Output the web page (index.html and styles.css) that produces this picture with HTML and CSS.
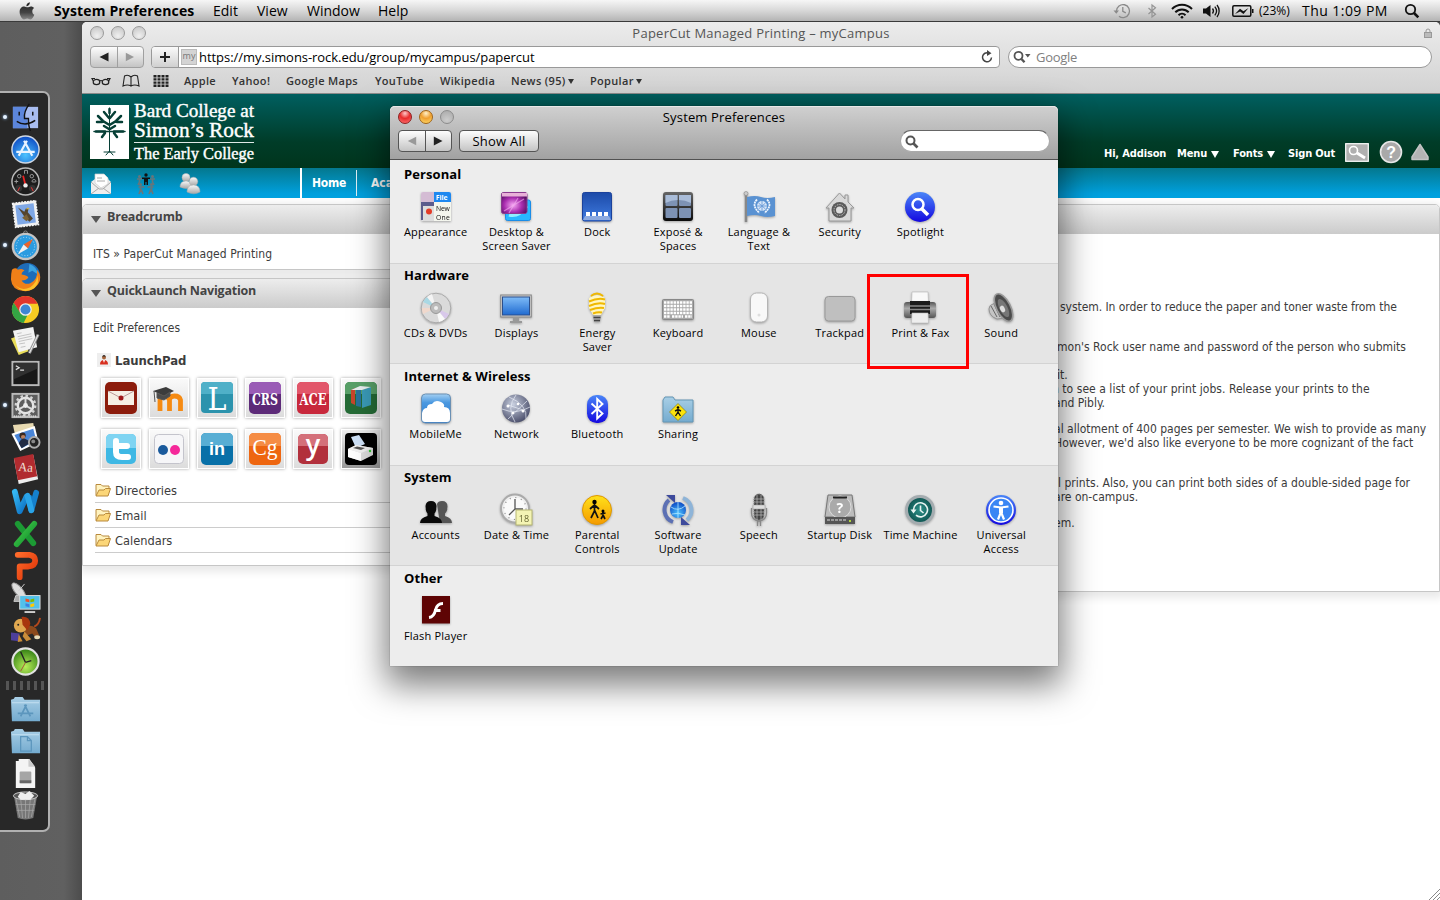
FILE: index.html
```html
<!DOCTYPE html>
<html lang="en">
<head>
<meta charset="utf-8">
<title>System Preferences</title>
<link rel="stylesheet" href="styles.css">
</head>
<body>
<svg class="defs" width="0" height="0">
  <defs>
    <linearGradient id="blue" x1="0" y1="0" x2="0" y2="1"><stop offset="0" stop-color="#7fbcf8"/><stop offset="1" stop-color="#1f6ad0"/></linearGradient>
    <linearGradient id="sky" x1="0" y1="0" x2="0" y2="1"><stop offset="0" stop-color="#a4d0f2"/><stop offset=".3" stop-color="#4a98e0"/><stop offset="1" stop-color="#2a78cc"/></linearGradient>
    <linearGradient id="deep" x1="0" y1="0" x2="0" y2="1"><stop offset="0" stop-color="#1c4aa8"/><stop offset="1" stop-color="#3f7be0"/></linearGradient>
    <linearGradient id="royal" x1="0" y1="0" x2="0" y2="1"><stop offset="0" stop-color="#4a86f8"/><stop offset="1" stop-color="#1408e0"/></linearGradient>
    <linearGradient id="silver" x1="0" y1="0" x2="0" y2="1"><stop offset="0" stop-color="#fafafa"/><stop offset="1" stop-color="#a8a8a8"/></linearGradient>
    <linearGradient id="steel" x1="0" y1="0" x2="0" y2="1"><stop offset="0" stop-color="#555"/><stop offset=".4" stop-color="#aaa"/><stop offset="1" stop-color="#555"/></linearGradient>
    <linearGradient id="folder" x1="0" y1="0" x2="0" y2="1"><stop offset="0" stop-color="#a9cfe6"/><stop offset="1" stop-color="#74abcf"/></linearGradient>
    <linearGradient id="black" x1="0" y1="0" x2="0" y2="1"><stop offset="0" stop-color="#666"/><stop offset="1" stop-color="#0a0a0a"/></linearGradient>
    <linearGradient id="apple" x1="0" y1="0" x2="0" y2="1"><stop offset="0" stop-color="#222"/><stop offset=".6" stop-color="#444"/><stop offset="1" stop-color="#888"/></linearGradient>
    <linearGradient id="gold" x1="0" y1="0" x2="0" y2="1"><stop offset="0" stop-color="#ffe21a"/><stop offset="1" stop-color="#f59a00"/></linearGradient>
    <radialGradient id="globe" cx=".4" cy=".35" r=".7"><stop offset="0" stop-color="#c9d0e0"/><stop offset="1" stop-color="#474b68"/></radialGradient>
    <radialGradient id="aqua" cx=".5" cy=".7" r=".7"><stop offset="0" stop-color="#4cc3ff"/><stop offset="1" stop-color="#0b49c4"/></radialGradient>
    <radialGradient id="lime" cx=".5" cy=".7" r=".7"><stop offset="0" stop-color="#b8ee5a"/><stop offset="1" stop-color="#2f7d12"/></radialGradient>
    <radialGradient id="pink" cx=".45" cy=".6" r=".7"><stop offset="0" stop-color="#f7a6f4"/><stop offset=".5" stop-color="#a82cae"/><stop offset="1" stop-color="#3d0a4c"/></radialGradient>
    <radialGradient id="teal" cx=".5" cy=".5" r=".6"><stop offset="0" stop-color="#2a9088"/><stop offset="1" stop-color="#0a4644"/></radialGradient>
    <linearGradient id="word" x1="0" y1="0" x2="1" y2="1"><stop offset="0" stop-color="#35b8f4"/><stop offset="1" stop-color="#0a6cc0"/></linearGradient>
    <linearGradient id="excel" x1="0" y1="0" x2="1" y2="1"><stop offset="0" stop-color="#46d04a"/><stop offset="1" stop-color="#0d8a2c"/></linearGradient>
    <linearGradient id="ppt" x1="0" y1="0" x2="1" y2="1"><stop offset="0" stop-color="#ff6a2a"/><stop offset="1" stop-color="#dd3408"/></linearGradient>
  </defs>
</svg>

<header class="menubar">
  <svg class="apple" viewBox="0 0 16 18" width="16" height="18"><path d="M10.800.3c.1 1.300-.4 2.300-1.100 3.000-.7.700-1.500 1.100-2.300 1.000C7.300 3.200 7.800 2.300 8.400 1.600 9.100.9 10 .4 10.800.3zM13.300 9.300c0-1.500.8-2.600 1.900-3.300-.8-1.100-2-1.600-3.300-1.600-1.400 0-2.300.8-3.300.8-1.100 0-2.100-.8-3.400-.8C2.700 4.400.6 6.400.6 9.800c0 3.700 2.400 7.600 4.400 7.600 1.100 0 1.800-.8 3.200-.8s2 .8 3.200.8c1.700 0 3.300-2.700 3.900-4.600-1.300-.6-2-1.900-2-3.500z" fill="url(#apple)"/></svg>
  <b class="m-app">System Preferences</b><span class="m-edit">Edit</span><span class="m-view">View</span><span class="m-window">Window</span><span class="m-help">Help</span>
  <div class="status">
    <svg class="s-tm" viewBox="0 0 18 16" width="18" height="16" fill="none" stroke="#8a8a8a" stroke-width="1.300"><path d="M3.500 8A6.500 6.500 0 1 1 6 13.200M9.800 4v4.300l3 1.500"/><path d="M.5 7.500h5.500L3.300 10.700z" fill="#8a8a8a" stroke="none"/></svg>
    <svg class="s-bt" viewBox="0 0 10 16" width="10" height="16" fill="none" stroke="#949494" stroke-width="1.200"><path d="M1.500 5l7 6.200L5 14V2l3.500 2.800-7 6.200"/></svg>
    <svg class="s-wifi" viewBox="0 0 22 16" width="22" height="16" fill="none" stroke="#111" stroke-width="2"><path d="M1 6a14 14 0 0 1 20 0M4.300 9.200a9.400 9.400 0 0 1 13.400 0M7.500 12.200a5 5 0 0 1 7 0"/><circle cx="11" cy="14.300" r="1.300" fill="#111" stroke="none"/></svg>
    <svg class="s-vol" viewBox="0 0 18 16" width="18" height="16"><path d="M1 5.500h3L8.500 2v12L4 10.500H1z" fill="#111"/><path d="M10.500 5.500a4 4 0 0 1 0 5M12.800 3.600a7 7 0 0 1 0 8.800M15 2a9.500 9.500 0 0 1 0 12" fill="none" stroke="#111" stroke-width="1.300"/></svg>
    <svg class="s-bat" viewBox="0 0 22 12" width="22" height="12"><rect x=".8" y=".8" width="18" height="10.400" rx="1.200" fill="none" stroke="#111" stroke-width="1.500"/><path d="M20 4v4h1.500V4z" fill="#111"/><path d="M3 9l5-5.300 3.400 2.500L16.500 3l-5 6-3.400-2.500z" fill="#111"/></svg>
    <span class="s-pct">(23%)</span><span class="s-time">Thu 1:09 PM</span>
    <svg class="s-find" viewBox="0 0 16 16" width="16" height="16" fill="none" stroke="#111"><circle cx="6.500" cy="6.500" r="4.700" stroke-width="1.800"/><path d="M10 10l4.300 4.300" stroke-width="2.600"/></svg>
  </div>
</header>

<main class="desktop">
  <nav class="dock">
    <div class="app run"><svg viewBox="0 0 32 32"><rect x="3" y="5" width="26" height="22" fill="#a9bdf0"/><path d="M3 5h15q-3 6-3 12h3v10H3z" fill="#5c86dc"/><path d="M20 2q-6 8-5 15h4q0 8 2 13" fill="none" stroke="#111" stroke-width="1.500"/><path d="M9.500 10v4M23.500 10v4M7 20q9 6 19-1" fill="none" stroke="#111" stroke-width="1.500"/></svg></div>
    <div class="app"><svg viewBox="0 0 32 32"><circle cx="16" cy="16" r="14" fill="url(#aqua)" stroke="#cfd8e4" stroke-width="1.500"/><g stroke="#e8f3ff" stroke-width="2.200" fill="none"><path d="M17.500 7L9 22.500M14.500 7L23 22.500M6.500 18.500h19"/></g></svg></div>
    <div class="app"><svg viewBox="0 0 32 32"><circle cx="16" cy="16" r="14" fill="#1d1d1d" stroke="#bbb" stroke-width="1.500"/><g stroke="#999" stroke-width="1" fill="none"><path d="M4.500 16h4M6.500 14v4M23 16.500a2 1.700 0 1 1 3.500 0z"/><circle cx="9.500" cy="10.500" r="1.800"/><circle cx="22.500" cy="10.500" r="1.800"/><path d="M15 8V4.500h3V8"/></g><circle cx="9" cy="23" r="3.500" fill="#333"/><circle cx="23" cy="23" r="3.500" fill="#333"/><path d="M8 26l2-4M24 26l-2-4" stroke="#e33"/><path d="M13.500 10L16 20" stroke="#e22" stroke-width="1.800"/><circle cx="16" cy="20" r="2.300" fill="#eee"/></svg></div>
    <div class="app"><svg viewBox="0 0 32 32"><g transform="rotate(-7 16 16)"><rect x="4" y="4" width="24" height="25" fill="#f0f0f0" stroke="#f5f5f5" stroke-width="1.500" stroke-dasharray="2 1"/><rect x="6.500" y="6.500" width="19" height="20" fill="#7fa8e6"/><path d="M9 9l6 5 2-3 2.500 1-1 3 4.500 7-4 3-4-5z" fill="#54452f"/><path d="M12 20l5-3 2 5-3 2z" fill="#7a6238"/><path d="M17 12l2-2 2 2z" fill="#d8b030"/></g></svg></div>
    <div class="app run"><svg viewBox="0 0 32 32"><circle cx="16" cy="3" r="2" fill="none" stroke="#888"/><circle cx="16" cy="17" r="13" fill="#2b9be0" stroke="#c4c4c4" stroke-width="2.500"/><circle cx="16" cy="17" r="9.500" fill="none" stroke="#b9e2fa" stroke-dasharray="1 2"/><path d="M24 9l-5.500 10-4.500-4z" fill="#e8642c"/><path d="M8 25l6-10 4.500 4z" fill="#f0f0f0"/></svg></div>
    <div class="app"><svg viewBox="0 0 32 32"><circle cx="18" cy="14" r="13" fill="#1e6cb8"/><path d="M20 2q8 3 9 11l-6-4-4 2z" fill="#3ba3e0"/><path d="M2 8q4-3 6 0 5-2 7 1-3 1-3 4 6 1 7 3-2 3-7 3 3 5 9 3 8-4 7-14 6 8 1 15-6 8-15 7Q2 29 1 18 1 12 2 8z" fill="#f08018"/><path d="M4 22q7 9 17 4 7-5 7-12 3 8-3 13-12 8-21-5z" fill="#fbc12c"/></svg></div>
    <div class="app"><svg viewBox="0 0 32 32"><circle cx="16" cy="16" r="14" fill="#f6cc22"/><path d="M16 2a14 14 0 0 1 12.500 8H16L10 19 3.800 9A14 14 0 0 1 16 2z" fill="#e3352c"/><path d="M3.800 9L11 20l7 2-4 8A14 14 0 0 1 3.800 9z" fill="#34a544"/><circle cx="16" cy="16" r="6.500" fill="#eee"/><circle cx="16" cy="16" r="5.200" fill="#3e86d4"/></svg></div>
    <div class="app"><svg viewBox="0 0 32 32"><path d="M1 13l8 17 10-4L14 8z" fill="#e8dc58"/><path d="M3 5l21-4 4 21-19 5z" fill="#f3f3f3"/><path d="M7 8l5-1M8 11l14-3M8.500 13.500l14-3M9 16l14-3M9.500 18.500l6-1M11 22l5-1" stroke="#b5b5b5" stroke-width=".8"/><path d="M29 9L20 28" stroke="#999" stroke-width="3"/><path d="M29 9L20 28" stroke="#eee" stroke-width="1"/></svg></div>
    <div class="app"><svg viewBox="0 0 32 32"><rect x="2.500" y="4" width="27" height="24" fill="#181818" stroke="#b9b9b9" stroke-width="2"/><path d="M4 5h24v6L4 22z" fill="#303030"/><path d="M6 8l3.500 2L6 12M10.500 12.500h4" fill="none" stroke="#e0e0e0" stroke-width="1.200"/></svg></div>
    <div class="app run"><svg viewBox="0 0 32 32"><rect x="2.500" y="4" width="27" height="24" fill="#5d5d5d" stroke="#b9b9b9" stroke-width="2"/><circle cx="16" cy="16" r="8" fill="none" stroke="#e4e4e4" stroke-width="2.500"/><circle cx="16" cy="16" r="10" fill="none" stroke="#d4d4d4" stroke-width="2.500" stroke-dasharray="2.600 2.600"/><path d="M16 16V8M16 16l7 4M16 16l-7 4" stroke="#ddd" stroke-width="2"/><circle cx="16" cy="16" r="2.500" fill="#eee"/><path d="M4 27h24" stroke="#ddd" stroke-width="2" stroke-dasharray="1 1"/></svg></div>
    <div class="app"><svg viewBox="0 0 32 32"><path d="M3 3l21-2 3 18-20 2z" fill="#e7d9b0"/><path d="M1.500 12l24-8 4 17-19 9z" fill="#fff"/><path d="M4.500 13.500L24 7l3 12-15 8z" fill="#4a86d8"/><circle cx="13" cy="14" r="3.200" fill="#3a2820"/><circle cx="13.500" cy="15.500" r="2.200" fill="#b98060"/><path d="M9 22q3-7 8-4l5 3-10 6z" fill="#222c44"/><circle cx="25" cy="21" r="5.500" fill="#222" stroke="#aaa" stroke-width="2"/><circle cx="24" cy="20" r="2" fill="#888"/></svg></div>
    <div class="app"><svg viewBox="0 0 32 32"><path d="M4 5l20-4 5 25-20 5z" fill="#eee"/><path d="M4 4l20-4 4 23-20 4z" fill="#b12b2f"/><text x="16" y="18" font-family="Liberation Serif" font-size="13" fill="#f0e0d8" text-anchor="middle" transform="rotate(5 16 16)">Aa</text></svg></div>
    <div class="app"><svg viewBox="0 0 32 32" fill="none" stroke-width="6" stroke-linecap="round" stroke-linejoin="round"><path d="M20 12l2 13L27 7" stroke="#1580cc"/><path d="M5 6l5 20 7-15" stroke="url(#word)"/><path d="M18 10l4 15" stroke="#2aa4e8"/></svg></div>
    <div class="app"><svg viewBox="0 0 32 32" fill="none" stroke-width="6" stroke-linecap="round"><path d="M8 6l16 20" stroke="#1c9a34"/><path d="M25 6L7 27" stroke="url(#excel)"/></svg></div>
    <div class="app"><svg viewBox="0 0 32 32" fill="none" stroke="url(#ppt)" stroke-width="6" stroke-linecap="round" stroke-linejoin="round"><path d="M8 5h12q6 1 6 6t-7 6h-9v11"/></svg></div>
    <div class="app"><svg viewBox="0 0 32 32"><ellipse cx="9" cy="9" rx="4" ry="10" fill="#ddd" stroke="#999" transform="rotate(-40 9 9)"/><path d="M9 9l6-7M6 14l-2 6h12l-4-6z" stroke="#ccc" fill="#aaa"/><rect x="10" y="14" width="21" height="14" fill="#52c1ea" stroke="#ddd"/><path d="M16 17l4 1v3l-4-1z" fill="#f25022"/><path d="M21 18l4-1v3l-4 1z" fill="#7fba00"/><path d="M16 22l4 1v3l-4-1z" fill="#3f7fe0"/><path d="M21 23l4-1v3l-4 1z" fill="#ffc800"/><path d="M15 31h11" stroke="#ccc" stroke-width="2"/></svg></div>
    <div class="app"><svg viewBox="0 0 32 32"><path d="M25 13q5-2 6-9" stroke="#b4481c" stroke-width="2" fill="none"/><path d="M14 13q8-3 13 2l4 9-4 1-4-5-8 3z" fill="#8c4a1c"/><circle cx="11" cy="12" r="7" fill="#e0a850"/><path d="M12 3q8-1 9 7l-3 7-5-6z" fill="#a8360e"/><path d="M15 18l7 8-5 2-4-5z" fill="#c98d3a"/><path d="M1 19l9 1-1 8-8-1z" fill="#4d3f9c"/><path d="M9 21l4 7-5 1z" fill="#c98d3a"/><ellipse cx="28" cy="24" rx="3" ry="2" fill="#e8dcb8"/><circle cx="8.500" cy="11" r="1" fill="#222"/></svg></div>
    <div class="app"><svg viewBox="0 0 32 32"><circle cx="16" cy="16" r="13.500" fill="url(#lime)" stroke="#e2e2e2" stroke-width="2.200"/><path d="M16 17l6-2M16 17L11 6" stroke="#222" stroke-width="1.400"/><path d="M16 17l-5 9" stroke="#a33" stroke-width=".8"/></svg></div>
    <div class="dock-sep"><i></i><i></i><i></i><i></i><i></i><i></i></div>
    <div class="app"><svg viewBox="0 0 32 32"><path d="M1 6l3-1 1-2h8l2 3h16v22H2z" fill="url(#folder)"/><path d="M2 9h28" stroke="#c3dff0"/><path d="M17 11l-6 12M15 11l6 12M8 20h16" stroke="#5c96bd" stroke-width="1.800"/></svg></div>
    <div class="app"><svg viewBox="0 0 32 32"><path d="M1 6l3-1 1-2h8l2 3h16v22H2z" fill="url(#folder)"/><path d="M2 9h28" stroke="#c3dff0"/><path d="M11 11h7l4 4v11H11zM18 11v4h4" fill="none" stroke="#5c96bd" stroke-width="1.300"/></svg></div>
    <div class="app"><svg viewBox="0 0 32 32"><path d="M6 3h3V1h11l5 7 1 2v21H6z" fill="#f4f4f4"/><path d="M19 1v8h7" fill="#ccc"/><rect x="10" y="14" width="12" height="12" rx="1" fill="#a5a5a5"/><path d="M10 23h12v3H10z" fill="#666"/></svg></div>
    <div class="app"><svg viewBox="0 0 32 32"><path d="M4 6l4 23q8 3 16 0l4-23z" fill="#777"/><path d="M6 8l4 20M11 9l2 20M16 9v20M21 9l-2 20M26 8l-4 20M6 15h20M7 21h18" stroke="#aaa" stroke-width=".7"/><ellipse cx="16" cy="6" rx="12.500" ry="4" fill="#555" stroke="#ccc"/><path d="M8 7l3-5 5 2 4-3 5 5-4 4H11z" fill="#eee"/></svg></div>
  </nav>

  <section class="safari">
    <div class="chrome">
      <div class="titlebar"><span class="lights off"><i></i><i></i><i></i></span><h1>PaperCut Managed Printing – myCampus</h1>
        <svg class="lock" viewBox="0 0 8 10" width="8" height="10"><rect x=".5" y="4.500" width="7" height="5" fill="#bbb" stroke="#999"/><path d="M2 4.500V3a2 2 0 0 1 4 0v1.500" fill="none" stroke="#999"/></svg></div>
      <div class="toolbar">
        <div class="seg light"><span><svg viewBox="0 0 10 10" width="10" height="10"><path d="M9.500 .5v9L.5 5z" fill="#222"/></svg></span><span><svg viewBox="0 0 10 10" width="10" height="10"><path d="M.8 .8v8.400L9 5z" fill="#999"/></svg></span></div>
        <div class="address"><span class="plus"><svg viewBox="0 0 12 12" width="12" height="12"><path d="M6 1v10M1 6h10" stroke="#222" stroke-width="2"/></svg></span><span class="favicon">my</span><span class="url">https://my.simons-rock.edu/group/mycampus/papercut</span>
          <svg class="reload" viewBox="0 0 14 14" width="14" height="14"><path d="M11.500 7.500A4.500 4.500 0 1 1 8.500 3" fill="none" stroke="#444" stroke-width="1.500"/><path d="M7 0v6l4.500-2.800z" fill="#444"/></svg></div>
        <div class="google"><svg viewBox="0 0 18 14" width="18" height="14"><circle cx="5.500" cy="5.800" r="4" fill="none" stroke="#555" stroke-width="1.800"/><path d="M8.500 9l3 3.300" stroke="#555" stroke-width="2.400"/><path d="M12 4h5.500l-2.700 3.500z" fill="#555"/></svg><span>Google</span></div>
      </div>
      <div class="bookmarks">
        <svg class="glasses" viewBox="0 0 20 12" width="20" height="12" fill="none" stroke="#222" stroke-width="1.200"><ellipse cx="5.500" cy="7" rx="3.300" ry="2.600"/><ellipse cx="14.500" cy="7" rx="3.300" ry="2.600"/><path d="M8.500 6q1.500-1 3 0M2.300 6L1 3.500h3M17.700 6L19 3.500h-3"/></svg>
        <svg class="book" viewBox="0 0 18 14" width="18" height="14" fill="none" stroke="#222" stroke-width="1.100"><path d="M9 3Q6 0 2.500 2L1 12q4.500-2 8 0 3.500-2 8 0L15.500 2Q12 0 9 3zM9 3v9"/></svg>
        <svg class="grid" viewBox="0 0 16 12" width="16" height="12" fill="none" stroke="#222" stroke-width="2.400" stroke-dasharray="3 1"><path d="M.5 1.200h15M.5 4.400h15M.5 7.600h15M.5 10.800h15"/></svg>
        <span class="b1">Apple</span><span class="b2">Yahoo!</span><span class="b3">Google Maps</span><span class="b4">YouTube</span><span class="b5">Wikipedia</span><span class="b6">News (95)<i class="caret"></i></span><span class="b7">Popular<i class="caret"></i></span>
      </div>
    </div>

    <div class="page">
      <div class="banner">
        <svg class="logo" viewBox="0 0 170 60" width="170" height="60">
          <rect x="0" y="1" width="39" height="54" fill="#fff"/>
          <g stroke="#063f36" fill="none" stroke-linecap="round"><path d="M19.500 4v44M14 48h11M16 51l3.500-4 3.500 4" stroke-width="1"/><path d="M19.500 5v4M19 14l-5-6M20 14l5-6M19.500 21L13 17 8 12M19.500 21l6.500-4 5-5M12 18H7M27 18h5M6 27.500h9M24 27.500h9M19 25l-5-3M20 25l5-3M15 29l-3 4M24 29l3 4" stroke-width="2.500"/><path d="M4 27.500h31" stroke-width="1.500"/></g>
          <g font-family="Liberation Serif, serif" fill="#fff" stroke="#fff" stroke-width=".4"><text x="44" y="13" font-size="18" textLength="120" lengthAdjust="spacingAndGlyphs">Bard College at</text><text x="44" y="32.500" font-size="20.500" textLength="120" lengthAdjust="spacingAndGlyphs">Simon’s Rock</text><text x="44" y="54.500" font-size="16.500" textLength="120" lengthAdjust="spacingAndGlyphs">The Early College</text></g>
          <path d="M44 38.500h120" stroke="#dfe9e6"/>
        </svg>
        <div class="userbar">
          <span class="u1">Hi, Addison</span><span class="u2">Menu <i></i></span><span class="u3">Fonts <i></i></span><span class="u4">Sign Out</span>
          <svg class="u-search" viewBox="0 0 24 19" width="24" height="19"><rect x=".7" y=".7" width="22.600" height="17.600" fill="#b0b0b0" stroke="#fff" stroke-width="1.200"/><circle cx="8.500" cy="7.500" r="4" fill="none" stroke="#fff" stroke-width="1.600"/><path d="M12 10l8 5" stroke="#fff" stroke-width="3"/></svg>
          <svg class="u-help" viewBox="0 0 24 24" width="24" height="24"><circle cx="12" cy="12" r="10.500" fill="#a9a9a9" stroke="#e6e6e6" stroke-width="1.600"/><text x="12" y="18" text-anchor="middle" font-family="Liberation Sans" font-weight="700" font-size="16" fill="#fff">?</text></svg>
          <svg class="u-up" viewBox="0 0 20 18" width="20" height="18"><path d="M10 1.500l8 12.500v2.500H2V14z" fill="#b4b4b4" stroke="#c4c4c4" stroke-width="1.500" stroke-linejoin="round"/></svg>
        </div>
      </div>
      <div class="sitenav">
        <svg class="n1" viewBox="0 0 20 22" width="20" height="22"><path d="M0 9l4-3V1h9l4 4v1l3 3v12H0z" fill="#eee"/><path d="M4 10V1h9l4 4v6l-7 4z" fill="#fff" stroke="#ccc" stroke-width=".7"/><path d="M6 5h5M6 8h8M0 9l8 7h4l8-7M0 21l8-6M20 21l-8-6" stroke="#aaa" fill="none"/></svg>
        <svg class="n2" viewBox="0 0 20 22" width="20" height="22"><g fill="#111"><circle cx="10" cy="2" r="1.700"/><path d="M6 4.500h8V6h-2v6h-1.500V9h-1v3H8V6H6z"/></g><g fill="none" stroke="#68757a" stroke-width="1.600"><path d="M1 6h5M3.500 6v3l-1.500 3M14 6h5M16.500 6v3l1.500 3M2.500 14h6M4.500 14v3l-1.500 4M5 16l2 5M11.500 14h6M15.500 14v3l1.500 4M15 16l-2 5"/></g><g fill="#68757a"><circle cx="3.500" cy="3.500" r="1.500"/><circle cx="16.500" cy="3.500" r="1.500"/><circle cx="4.500" cy="11.500" r="1.500"/><circle cx="15.500" cy="11.500" r="1.500"/></g></svg>
        <svg class="n3" viewBox="0 0 20 22" width="20" height="22" fill="url(#silver)" stroke="#aaa" stroke-width=".5"><circle cx="6" cy="4.500" r="4"/><path d="M0 14q0-6 6-6t6 6q-6 3-12 0z"/><circle cx="13.500" cy="8.500" r="4.300"/><path d="M7 19q0-7 6.500-7t6.500 7q-6 3.500-13 0z"/></svg>
        <a class="home">Home</a><a class="acad">Academics</a>
      </div>
      <div class="columns">
        <div class="left">
          <div class="portlet"><h2><i></i>Breadcrumb</h2><div class="crumb">ITS » PaperCut Managed Printing</div></div>
          <div class="portlet quick"><h2><i></i>QuickLaunch Navigation</h2>
            <div class="editpref">Edit Preferences</div>
            <div class="launch"><svg viewBox="0 0 14 14" width="14" height="14"><rect width="14" height="14" fill="#eee"/><circle cx="7" cy="4.500" r="2" fill="#a8643a"/><path d="M5 3.500q2-3 4 0z" fill="#222"/><path d="M3 11.500q0-4.500 4-4.500t4 4.500z" fill="#d83020"/><path d="M6 7l1 3 1-3z" fill="#fff"/></svg>LaunchPad</div>
            <div class="tiles">
              <div class="tile"><svg viewBox="0 0 32 32"><rect width="32" height="32" rx="5" fill="#8c1c0c"/><rect x="3" y="9" width="26" height="14" fill="#f6efe4"/><path d="M3 9l13 7 13-7" fill="none" stroke="#b99"/><circle cx="16" cy="16" r="2.500" fill="#a01818"/></svg></div>
              <div class="tile"><svg viewBox="0 0 32 32"><path d="M7 29V18q0-4 4-4t5.500 4v11M16.500 29V18q0-4 5-4t6 4v11" fill="none" stroke="#f58a12" stroke-width="4.800"/><path d="M0 9l13-4 8 4-10 5z" fill="#3c3c3c"/><path d="M4 11v5l7 2 6-4v-4l-6 4zM1 9l1 11" stroke="#555" fill="#4c4c4c"/></svg></div>
              <div class="tile"><svg viewBox="0 0 32 32"><rect width="32" height="31" rx="4" fill="#2c93ad"/><path d="M4 0h24q4 0 4 4v8H0V4q0-4 4-4z" fill="#4fb0c8"/><text x="16" y="27.500" font-family="DejaVu Serif" font-size="31" textLength="19" lengthAdjust="spacingAndGlyphs" text-anchor="middle" fill="#fff">L</text></svg></div>
              <div class="tile"><svg viewBox="0 0 32 32"><rect width="32" height="32" rx="5" fill="#5c2a78"/><path d="M5 0h22q5 0 5 5v7H0V5q0-5 5-5z" fill="#9a5cb6"/><text x="16" y="23" font-family="DejaVu Serif" font-weight="700" font-size="16" textLength="26" lengthAdjust="spacingAndGlyphs" text-anchor="middle" fill="#fff">CRS</text></svg></div>
              <div class="tile"><svg viewBox="0 0 32 32"><rect width="32" height="32" rx="5" fill="#c8283c"/><path d="M5 0h22q5 0 5 5v7H0V5q0-5 5-5z" fill="#e2566a"/><text x="16" y="23" font-family="DejaVu Serif" font-weight="700" font-size="16" textLength="27" lengthAdjust="spacingAndGlyphs" text-anchor="middle" fill="#fff">ACE</text></svg></div>
              <div class="tile"><svg viewBox="0 0 32 32"><rect width="32" height="32" rx="5" fill="#256b36"/><path d="M5 0h22q5 0 5 5v7H0V5q0-5 5-5z" fill="#58a068"/><path d="M6 8l4-2v17l-4-2z" fill="#c8452c"/><path d="M11 7l5-2v20l-5-1z" fill="#28739c"/><path d="M17 8l9-3v18l-9 3z" fill="#3a9bb8"/><path d="M6 8l9-4 11 1-9 3z" fill="#e8eef0"/></svg></div>
              <div class="tile"><svg viewBox="0 0 32 32"><rect x="1" y="1" width="30" height="30" rx="5" fill="#3fb8e4"/><path d="M6 1h20q5 0 5 5v9H1V6q0-5 5-5z" fill="#7fd4f2"/><path d="M11 8v11q0 5 6 5h6M11 13h11" fill="none" stroke="#fff" stroke-width="6" stroke-linecap="round"/></svg></div>
              <div class="tile"><svg viewBox="0 0 32 32"><rect x="1.500" y="1.500" width="29" height="29" rx="4" fill="#f6f6f8" stroke="#c4c4cc"/><circle cx="10" cy="17" r="5" fill="#1a5a9c"/><circle cx="22" cy="17" r="5" fill="#f5289a"/></svg></div>
              <div class="tile"><svg viewBox="0 0 32 32"><rect width="32" height="32" rx="5" fill="#0870a8"/><path d="M5 0h22q5 0 5 5v8H0V5q0-5 5-5z" fill="#58aed4"/><text x="16" y="22" font-family="Liberation Sans" font-weight="700" font-size="18" text-anchor="middle" fill="#fff">in</text></svg></div>
              <div class="tile"><svg viewBox="0 0 32 32"><rect width="32" height="32" rx="5" fill="#ee6610"/><path d="M5 0h22q5 0 5 5v8H0V5q0-5 5-5z" fill="#f58c44"/><text x="16" y="22" font-family="Liberation Serif" font-size="23" textLength="25" lengthAdjust="spacingAndGlyphs" text-anchor="middle" fill="#fff">Cg</text></svg></div>
              <div class="tile"><svg viewBox="0 0 32 32"><rect x="1" y="1" width="30" height="30" rx="5" fill="#b2303c"/><path d="M6 1h20q5 0 5 5v7H1V6q0-5 5-5z" fill="#d4707a"/><text x="16" y="20.500" font-family="Open Sans" font-weight="600" font-size="27" text-anchor="middle" fill="#fff">y</text></svg></div>
              <div class="tile dark"><svg viewBox="0 0 32 32"><rect width="32" height="32" rx="4" fill="#000"/><path d="M6 4l8-2 6 9-9 4z" fill="#cfe2f8"/><path d="M3 16l8-4 17 3v7l-12 6-13-4z" fill="#ddd"/><path d="M3 16l13 4v8L3 24z" fill="#fff"/><path d="M3 16l8-4 17 3-12 5z" fill="#f2f2f2"/><path d="M8 15l4-1.500 8 1.500-4 2z" fill="#555"/><circle cx="25" cy="18" r="1.200" fill="#3c3"/></svg></div>
            </div>
            <ul class="folders">
              <li><svg viewBox="0 0 16 14" width="16" height="14"><path d="M1 12.500V1.500h5L7.500 3H14v3" fill="#fff3c0" stroke="#b98a3c"/><path d="M1 13l3-6h5l1.500-1.500h5L13 13z" fill="#fbd678" stroke="#b98a3c"/></svg>Directories</li>
              <li><svg viewBox="0 0 16 14" width="16" height="14"><path d="M1 12.500V1.500h5L7.500 3H14v3" fill="#fff3c0" stroke="#b98a3c"/><path d="M1 13l3-6h5l1.500-1.500h5L13 13z" fill="#fbd678" stroke="#b98a3c"/></svg>Email</li>
              <li><svg viewBox="0 0 16 14" width="16" height="14"><path d="M1 12.500V1.500h5L7.500 3H14v3" fill="#fff3c0" stroke="#b98a3c"/><path d="M1 13l3-6h5l1.500-1.500h5L13 13z" fill="#fbd678" stroke="#b98a3c"/></svg>Calendars</li>
            </ul>
          </div>
        </div>
        <div class="right portlet"><h2></h2>
          <div class="article">
            <p class="p1">system. In order to reduce the paper and toner waste from the</p>
            <p class="p2">mon's Rock user name and password of the person who submits</p>
            <p class="p3">it.<br><span class="back-n">n to see a list of your print jobs. Release your prints to the</span><br><span class="back-a">and Pibly.</span></p>
            <p class="p4"><span class="back-a">al allotment of 400 pages per semester. We wish to provide as many</span><br><span class="back-h">However, we'd also like everyone to be more cognizant of the fact</span></p>
            <p class="p5"><span class="back-l">l prints. Also, you can print both sides of a double-sided page for</span><br><span class="back-a">are on-campus.</span></p>
            <p class="p6"><span class="back-a">em.</span></p>
          </div>
        </div>
      </div>
      <svg class="grip" viewBox="0 0 12 12" width="12" height="12" stroke="#888"><path d="M1 12L12 1M5 12l7-7M9 12l3-3"/></svg>
    </div>
  </section>

  <section class="prefs">
    <div class="prefs-head">
      <div class="titlebar"><span class="lights on"><i></i><i></i><i></i></span><h1>System Preferences</h1></div>
      <div class="toolbar">
        <div class="seg"><span><svg viewBox="0 0 10 10" width="10" height="10"><path d="M9.200 .8v8.400L.8 5z" fill="#999"/></svg></span><span><svg viewBox="0 0 10 10" width="10" height="10"><path d="M.8 .5v9L9.500 5z" fill="#222"/></svg></span></div>
        <div class="showall">Show All</div>
        <div class="search"><svg viewBox="0 0 14 14" width="14" height="14"><circle cx="5.500" cy="5.500" r="4" fill="none" stroke="#555" stroke-width="2"/><path d="M8.500 8.500l4 4" stroke="#555" stroke-width="2.600"/></svg></div>
      </div>
    </div>

    <div class="group g1"><h2>Personal</h2><div class="items">
      <div class="item"><svg viewBox="0 0 32 32"><rect x="1" y="1" width="30" height="29" rx="2" fill="#e8e8ee"/><path d="M1 3q0-2 2-2h11v10H1z" fill="#d4bcd4"/><path d="M14 1h15q2 0 2 2v8H14z" fill="#1e88f0"/><path d="M1 11h13v18H1z" fill="#5c5c8c"/><rect x="3" y="15" width="11" height="15" fill="#ddd"/><path d="M14 11h17v19H14z" fill="#f4f6ee"/><circle cx="9" cy="20.500" r="3" fill="#e43c28"/><g font-family="Open Sans" font-size="6.800"><text x="16" y="9" font-weight="700" textLength="12" fill="#fff">File</text><text x="16" y="19.500" textLength="14" fill="#111">New</text><text x="16" y="29" textLength="14" fill="#111">One</text></g></svg>Appearance</div>
      <div class="item"><svg viewBox="0 0 32 32"><rect x="5.500" y="9" width="25" height="20.500" rx="2" fill="#28b8ff" stroke="#1a8de8"/><path d="M9 24q9 3 18-9" stroke="#90f0ff" stroke-width="3" fill="none"/><rect x="1.500" y="1.500" width="25.500" height="21" rx="2" fill="url(#pink)" stroke="#8a3a90"/><path d="M4 20L24 8M9 22l9-15" stroke="#f4b0f0" stroke-width="1.200" opacity=".6"/><path d="M2 2h25v3.500H2z" fill="#e8b0d8"/></svg>Desktop &amp;<br>Screen Saver</div>
      <div class="item"><svg viewBox="0 0 32 32"><rect x="1.500" y="1.500" width="29" height="28.500" rx="2" fill="url(#deep)" stroke="#1b429c"/><path d="M4 25h24l2 4H2z" fill="#8caae0"/><path d="M5 23h22" stroke="#fff" stroke-width="4" stroke-dasharray="4 2"/></svg>Dock</div>
      <div class="item"><svg viewBox="0 0 32 32"><rect x="1" y="1" width="30" height="29" rx="3" fill="url(#black)"/><g fill="#7d92b4"><rect x="3.500" y="4" width="12" height="11" rx="1"/><rect x="17" y="4" width="12" height="11" rx="1"/><rect x="3.500" y="17" width="12" height="10" rx="1"/><rect x="17" y="17" width="12" height="10" rx="1"/></g><g fill="#a9bcd8"><path d="M3.500 4h12v5q-6 0-12 3zM17 4h12v8q-6-3-12-3z"/></g></svg>Exposé &amp;<br>Spaces</div>
      <div class="item"><svg viewBox="0 0 32 32"><path d="M3 2v29" stroke="#888" stroke-width="2.500"/><circle cx="3" cy="2.500" r="2" fill="#ccc" stroke="#888" stroke-width=".6"/><path d="M4 6q8-2 14 0t14 0v19q-8 2-14 0t-14 0z" fill="#5a92d2"/><circle cx="19" cy="15" r="5" fill="#d8e6f8"/><path d="M14 15h10M19 10v10M15.500 12l7 6M22.500 12l-7 6" stroke="#6c9cd8" stroke-width=".9"/><path d="M14 8.500q-6 6 2.500 13.500M24 8.500q6 6-2.500 13.500" stroke="#f0f6ff" stroke-width="1.800" stroke-dasharray="2 .6" fill="none"/></svg>Language &amp;<br>Text</div>
      <div class="item"><svg viewBox="0 0 32 32"><path d="M2 17L15.500 2 21 8V4h3v7l6 6h-3v13H5V17z" fill="#d9d9d9" stroke="#999"/><circle cx="15.500" cy="19" r="8" fill="#5b5b5b"/><circle cx="15.500" cy="19" r="5.500" fill="none" stroke="#bbb" stroke-dasharray="1.500 1"/><circle cx="15.500" cy="19" r="3.500" fill="#ddd"/></svg>Security</div>
      <div class="item"><svg viewBox="0 0 32 32"><circle cx="16" cy="16" r="15" fill="url(#royal)"/><circle cx="14" cy="13.500" r="5.500" fill="none" stroke="#fff" stroke-width="2.500"/><path d="M18 18l6 6" stroke="#fff" stroke-width="3.500"/></svg>Spotlight</div>
    </div></div>

    <div class="group g2 alt"><h2>Hardware</h2><div class="items">
      <div class="item"><svg viewBox="0 0 32 32"><circle cx="16" cy="16" r="14.800" fill="#dadada" stroke="#aaa"/><path d="M16 16L3 10a14 14 0 0 1 4-5z" fill="#a9d8e4"/><path d="M16 16L7 5a14 14 0 0 1 5-3z" fill="#f4f4f4"/><path d="M16 16l13 6a14 14 0 0 1-4 5z" fill="#d8c8ea"/><path d="M16 16l9 11a14 14 0 0 1-6 3z" fill="#f8f8f8"/><path d="M16 16L3 22a14 14 0 0 1-1-6z" fill="#f0d8cc"/><circle cx="16" cy="16" r="5.500" fill="#bbb" stroke="#999"/><circle cx="16" cy="16" r="2" fill="#eee"/></svg>CDs &amp; DVDs</div>
      <div class="item"><svg viewBox="0 0 32 32"><rect x=".7" y="3" width="30.600" height="22" fill="#ccc" stroke="#888"/><rect x="2.500" y="5" width="27" height="18" fill="url(#blue)" stroke="#2b4f8c"/><path d="M13 25h6v4h3v2H10v-2h3z" fill="#999"/></svg>Displays</div>
      <div class="item"><svg viewBox="0 0 32 32"><path d="M8 6q8-6 16 0v10l-4 7h-8l-4-7z" fill="#fff6c0"/><path d="M10 4q6-5 12 0M8 9.500q9-4 16-2M8 14q9-4 16-2M9 18q8-3 14-2M12 21.500q5-2 9-1" fill="none" stroke="#f0b800" stroke-width="2"/><path d="M12 23h8l-1 7h-6z" fill="#aaa"/><path d="M12.500 25.500h7M13 28.500h6" stroke="#444" stroke-width="1.300"/></svg>Energy<br>Saver</div>
      <div class="item"><svg viewBox="0 0 32 32"><rect x=".5" y="7.500" width="31" height="20" rx="1" fill="#a8a8a8" stroke="#888"/><path d="M2 10.500h28M2 14h28M2 17.500h28M2 21h28M2 24.500h6M10 24.500h11M23 24.500h7" stroke="#fff" stroke-width="2.300" stroke-dasharray="2.400 .8"/></svg>Keyboard</div>
      <div class="item"><svg viewBox="0 0 32 32"><rect x="7.500" y="1" width="17" height="29" rx="6" fill="#f8f8f8" stroke="#b4b4b4"/><circle cx="16" cy="23" r="1.500" fill="#ddd"/></svg>Mouse</div>
      <div class="item"><svg viewBox="0 0 32 32"><rect x="1" y="4.500" width="30" height="24.500" rx="3.500" fill="#bfbfbf" stroke="#999"/></svg>Trackpad</div>
      <div class="item"><svg viewBox="0 0 32 32"><path d="M8 0h16l.500 11H7.500z" fill="#f8f8f8" stroke="#bbb" stroke-width=".7"/><rect x="0" y="10" width="32" height="16" rx="3" fill="url(#steel)"/><path d="M6 9h20v13H6z" fill="#1c1c1c"/><path d="M6 14h20M6 17.500h20" stroke="#888" stroke-width="1.500"/><path d="M8 21h16l.5 10h-17z" fill="#eee" stroke="#bbb" stroke-width=".6"/></svg>Print &amp; Fax</div>
      <div class="item"><svg viewBox="0 0 32 32"><path d="M4 17q0-4 4-5l4-3 8 17-8 1q-8-3-8-10z" fill="#c4c4c4" stroke="#888" stroke-width=".8"/><path d="M6 14l6 11M9 12l6 13" stroke="#666"/><ellipse cx="18.500" cy="15.500" rx="7" ry="15" fill="#4c4c4c" stroke="#999" stroke-width="1.600" transform="rotate(-27 18.500 15.500)"/><ellipse cx="18.500" cy="16" rx="4" ry="10" fill="#777" transform="rotate(-27 18.500 16)"/><ellipse cx="17.500" cy="17" rx="2.300" ry="3.500" fill="#ddd" transform="rotate(-27 17.500 17)"/></svg>Sound</div>
    </div></div>

    <div class="group g3"><h2>Internet &amp; Wireless</h2><div class="items">
      <div class="item"><svg viewBox="0 0 32 32"><rect x="1.500" y="1" width="29" height="29" rx="4" fill="url(#sky)" stroke="#6a90b4"/><path d="M2 20q1-5 5-5 0-4 5-4 3-5 9-2 4 2 3 5 6 0 6 6v6q0 3-3 3H5q-3 0-3-3z" fill="#fff"/></svg>MobileMe</div>
      <div class="item"><svg viewBox="0 0 32 32"><circle cx="16" cy="15.500" r="14" fill="url(#globe)"/><g fill="none" stroke="#e8ecf6" stroke-width=".7"><path d="M2 16q14 6 28-2M16 2Q6 15 15 29M9 4q19 8 17 22M8 12l15 5M8 26L27 8"/></g><g fill="#fff"><circle cx="8" cy="13" r="1.500"/><circle cx="23" cy="18" r="1.500"/><circle cx="18" cy="11" r="1.300"/><circle cx="13" cy="20" r="1.300"/></g></svg>Network</div>
      <div class="item"><svg viewBox="0 0 32 32"><rect x="6" y="2" width="21" height="28" rx="9.500" fill="url(#royal)"/><path d="M10.500 10.500l11 10-5.300 5V6l5.300 5-11 10" fill="none" stroke="#fff" stroke-width="1.900"/></svg>Bluetooth</div>
      <div class="item"><svg viewBox="0 0 32 32"><path d="M1 7l2-3h8l2 3h18v22H1z" fill="url(#folder)" stroke="#6497b6"/><path d="M16 10.500L24.500 19 16 27.500 7.500 19z" fill="#fce30c" stroke="#7a6a00" stroke-width=".6"/><path d="M16 16v3l-2.500 4M16 19l2.500 4M13 18l3-1.500 3 1.500" stroke="#111" stroke-width="1.400" fill="none"/><circle cx="16" cy="14.500" r="1.300"/></svg>Sharing</div>
    </div></div>

    <div class="group g4 alt"><h2>System</h2><div class="items">
      <div class="item"><svg viewBox="0 0 32 32"><path d="M17 10q1-3 5-3 5.500 0 5.500 5.500 0 5-2.500 7v2.500q7 2 7 7H20z" fill="#555"/><path d="M0 29q0-5 7.500-7v-2.500q-2-2-2-7.500Q6 7 11 7t5.500 5q0 5.500-2 7.500V22q7.500 2 7.500 7z" fill="#0a0a0a"/></svg>Accounts</div>
      <div class="item"><svg viewBox="0 0 32 32"><circle cx="15" cy="14.500" r="14" fill="#eee" stroke="#aaa" stroke-width="2"/><circle cx="15" cy="14.500" r="11" fill="#fafafa" stroke="#888" stroke-width="1.200" stroke-dasharray="1 4.760"/><path d="M15 5v10h8M15 15l-6 6" stroke="#555" stroke-width="1.300" fill="none"/><rect x="16" y="16" width="16" height="15" fill="#f4f4b4" stroke="#b5b573"/><text x="24" y="28" font-family="Open Sans" font-size="9" text-anchor="middle" fill="#663">18</text></svg>Date &amp; Time</div>
      <div class="item"><svg viewBox="0 0 32 32"><circle cx="16" cy="16" r="14.500" fill="url(#gold)" stroke="#e09800"/><g stroke="#111" stroke-width="1.700" fill="none"><path d="M13.500 10v7l-3.500 7M13.500 16l3.500 8M9 15l4.500-4 4.500 4M22 18v3.500L20 25M22 21l2 4M19.500 20l5-1"/></g><circle cx="13.500" cy="8" r="2.200"/><circle cx="22" cy="17" r="1.500"/></svg>Parental<br>Controls</div>
      <div class="item"><svg viewBox="0 0 32 32"><circle cx="16" cy="16" r="8" fill="url(#aqua)"/><path d="M9 13q7 5 14-1M10 20q6-2 13 1M16 8v16" stroke="#b5e8ff" fill="none" stroke-width=".8"/><path d="M11 28A13 13 0 0 1 7 6" fill="none" stroke="#5c70b4" stroke-width="4"/><path d="M4 1h9v8z" fill="#3d4a9c"/><path d="M21 4a13 13 0 0 1 4 22" fill="none" stroke="#8eb4d8" stroke-width="4"/><path d="M28 31H19v-8z" fill="#3d4a9c"/></svg>Software<br>Update</div>
      <div class="item"><svg viewBox="0 0 32 32"><rect x="11" y="0" width="10" height="26" rx="5" fill="#444" stroke="#888" stroke-dasharray="1 1"/><path d="M11 5h10M11 8h10M11 18h10M11 21h10M14 1v25M18 1v25" stroke="#bbb" stroke-width=".7"/><rect x="10" y="11" width="12" height="4" fill="#ddd" stroke="#999" stroke-width=".5"/><path d="M8.500 14v5q0 7 7.500 8 7.500-1 7.500-8v-5M14.500 27v5M17.500 27v5" stroke="#888" stroke-width="1.300" fill="none"/></svg>Speech</div>
      <div class="item"><svg viewBox="0 0 32 32"><path d="M4 1h24l3 22H1z" fill="#bcbcbc" stroke="#777"/><circle cx="16" cy="13" r="11" fill="#aaa" stroke="#ddd"/><path d="M1 23h30v7H1z" fill="#555"/><path d="M3 26h20" stroke="#999" stroke-width="2" stroke-dasharray="3 1"/><path d="M9 3.500h14" stroke="#222" stroke-width="2"/><text x="16" y="19" font-family="Open Sans" font-weight="700" font-size="14" text-anchor="middle" fill="#fff">?</text><circle cx="26" cy="27" r="1" fill="#cf3"/></svg>Startup Disk</div>
      <div class="item"><svg viewBox="0 0 32 32"><circle cx="16" cy="16" r="13.500" fill="url(#teal)" stroke="#a4acb0" stroke-width="3"/><path d="M9.500 16a7 7 0 1 1 2.500 5.200M16.500 11.500v5l3 2.500" fill="none" stroke="#e8f4f2" stroke-width="1.600"/><path d="M6.500 15.500h6l-3 4z" fill="#e8f4f2"/></svg>Time Machine</div>
      <div class="item"><svg viewBox="0 0 32 32"><circle cx="16" cy="16" r="15" fill="url(#royal)"/><circle cx="16" cy="16" r="12" fill="#3a86f4" stroke="#fff" stroke-width="1.600"/><circle cx="16" cy="9" r="2.300" fill="#fff"/><path d="M8.500 12.500l7.500 1 7.500-1M16 14v4l-3 7.500M16 18l3 7.500" fill="none" stroke="#fff" stroke-width="2.200"/><path d="M14 13h4v6h-4z" fill="#fff"/></svg>Universal<br>Access</div>
    </div></div>

    <div class="group g5"><h2>Other</h2><div class="items">
      <div class="item"><svg viewBox="0 0 32 32"><rect x="2" y="1" width="28" height="27.500" fill="#5e0404"/><path d="M23 8.500q-6 0-7.500 6.500-1.500 7-6.500 7.500M14 15.500h6.500" fill="none" stroke="#fff" stroke-width="3"/></svg>Flash Player</div>
    </div></div>
  </section>
  <div class="highlight"></div>
</main>
</body>
</html>
```

FILE: styles.css
```css
* { box-sizing: border-box; }
body { margin: 0; width: 1440px; height: 900px; overflow: hidden; font-family: "Open Sans", "Noto Sans", sans-serif; color: #000; background: #5e5e5e; }
h1, h2, p, ul { margin: 0; padding: 0; font-weight: 400; }
svg { display: block; flex: none; overflow: visible; }
i { font-style: normal; }
.defs { position: absolute; }

.menubar { height: 22px; display: flex; align-items: center; padding: 0 0 0 19px; background: linear-gradient(#f6f6f6, #d8d8d8 50%, #b4b4b4); border-bottom: 1px solid #3a3a3a; font-size: 14px; line-height: 20px; white-space: nowrap; }
.menubar > *, .status > * { flex: none; }
.apple { margin-right: 19px; }
.m-app { width: 159px; letter-spacing: .15px; }
.m-edit { width: 44px; }
.m-view { width: 50px; }
.m-window { width: 71px; }
.status { display: flex; align-items: center; margin-left: auto; width: 327px; height: 20px; }
.s-tm { margin-right: 16px; }
.s-bt { margin-right: 14px; }
.s-wifi { margin-right: 9px; }
.s-vol { margin-right: 12px; }
.s-bat { margin-right: 5px; }
.s-pct { width: 43px; font-size: 12px; }
.s-time { width: 102px; letter-spacing: .45px; }

.desktop { position: relative; height: 878px; background: linear-gradient(90deg, #5e5e5e 0, #606060 64px, #4c4c4c 82px); }

.dock { position: absolute; left: 0; top: 69px; width: 50px; height: 741px; padding-top: 8px; background: #282828; border: 2px solid #b0b0b0; border-left: 0; border-radius: 0 7px 7px 0; }
.app { height: 32px; display: flex; align-items: center; padding-left: 10px; }
.app svg { width: 31px; height: 31px; }
.app.run { padding-left: 3px; }
.app.run::before { content: ""; width: 4px; height: 4px; margin-right: 3px; border-radius: 50%; background: #e6f2ff; box-shadow: 0 0 3px #9cc8ff; }
.dock-sep { height: 16px; display: flex; align-items: center; gap: 4px; padding-left: 6px; }
.dock-sep i { width: 3px; height: 9px; background: #555; }

.safari { position: absolute; left: 82px; top: 0; width: 1358px; height: 878px; background: #fff; border-radius: 5px 5px 0 0; overflow: hidden; }
.chrome { height: 72px; background: linear-gradient(#ececec, #d2d2d2); border-bottom: 1px solid #8a8a8a; }
.titlebar { height: 22px; display: flex; align-items: center; position: relative; }
.titlebar h1 { flex: 1; text-align: center; font-size: 13px; line-height: 22px; letter-spacing: .15px; }
.lights { position: absolute; left: 8px; display: flex; gap: 7px; }
.lights i { width: 14px; height: 14px; border-radius: 50%; border: 1px solid #999; background: radial-gradient(circle at 50% 75%, #f0f0f0, #c2c2c2); }
.lights.on i:nth-child(1) { border-color: #8c2020; background: radial-gradient(circle at 50% 20%, #ffc8c8 0, #e82c2c 45%, #ff7878 100%); }
.lights.on i:nth-child(2) { border-color: #a06418; background: radial-gradient(circle at 50% 20%, #fff0c8 0, #f0a030 45%, #ffe070 100%); }
.lights.on i:nth-child(3) { background: radial-gradient(circle at 50% 75%, #ccc, #a8a8a8); border-color: #8c8c8c; }
.safari .titlebar h1 { color: #555; letter-spacing: .25px; }
.lock { position: absolute; right: 8px; top: 6px; }
.toolbar { display: flex; height: 22px; }
.safari .toolbar { padding-left: 8px; margin-top: 2px; }
.seg { display: flex; width: 54px; height: 22px; border: 1px solid #555; border-radius: 4px; background: linear-gradient(#fdfdfd, #c4c4c4); }
.seg span { flex: 1; display: flex; align-items: center; justify-content: center; }
.seg span + span { border-left: 1px solid #555; }
.seg.light, .seg.light span + span { border-color: #a0a0a0; }
.address { display: flex; align-items: center; width: 849px; height: 22px; margin-left: 7px; border: 1px solid #999; border-radius: 4px; background: #fff; overflow: hidden; }
.plus { width: 27px; height: 20px; display: flex; align-items: center; justify-content: center; background: linear-gradient(#fafafa, #d0d0d0); border-right: 1px solid #999; }
.favicon { width: 16px; height: 16px; margin: 0 2px 0 2px; background: #d4d4d4; border: 1px solid #bbb; color: #777; font-size: 9px; line-height: 12px; text-align: center; }
.url { flex: 1; font-size: 13px; letter-spacing: -.05px; }
.reload { margin-right: 5px; }
.google { display: flex; align-items: center; gap: 5px; width: 424px; height: 22px; margin-left: 8px; padding-left: 4px; border: 1px solid #999; border-radius: 11px; background: #fff; color: #808080; font-size: 13px; letter-spacing: -.3px; }
.bookmarks { display: flex; align-items: center; height: 25px; padding-left: 9px; font-size: 11px; font-weight: 600; letter-spacing: .32px; color: #333; white-space: nowrap; }
.bookmarks > * { flex: none; }
.glasses { margin-right: 11px; }
.book { margin-right: 13px; }
.grid { margin-right: 15px; }
.b1 { width: 48px; } .b2 { width: 54px; } .b3 { width: 89px; } .b4 { width: 65px; } .b5 { width: 71px; } .b6 { width: 79px; }
.caret { display: inline-block; margin-left: 2px; vertical-align: 1px; border: 3px solid transparent; border-top: 5px solid #333; border-bottom: 0; }

.page { position: relative; height: 806px; font-family: "DejaVu Sans Condensed", "Open Sans", sans-serif; font-size: 12px; color: #3c3c3c; }
.banner { display: flex; height: 74px; padding: 10px 0 0 8px; background: linear-gradient(#005f60, #003c28 65%, #00351c); }
.userbar { display: flex; align-items: center; margin: 36px 0 0 auto; width: 336px; height: 24px; font-size: 11px; font-weight: 700; letter-spacing: -.15px; color: #fff; white-space: nowrap; }
.userbar > * { flex: none; }
.userbar span { padding-top: 2px; }
.userbar i { display: inline-block; margin-left: 1px; border: 4.500px solid transparent; border-top: 7px solid #fff; border-bottom: 0; vertical-align: -1px; }
.u1 { width: 73px; } .u2 { width: 56px; } .u3 { width: 55px; } .u4 { width: 57px; }
.u-help { margin-left: 10px; }
.u-up { margin-left: 7px; }
.sitenav { display: flex; align-items: center; height: 30px; padding-left: 9px; background: linear-gradient(#04788e, #009fdc 85%, #00a2e0); font-weight: 700; font-size: 12px; color: #fff; }
.sitenav svg { margin-top: 2px; }
.n1 { margin-right: 25px; } .n2 { margin-right: 24px; }
.home { width: 56px; height: 30px; margin-left: 100px; padding-left: 10px; border-left: 2px solid #fff; line-height: 30px; letter-spacing: -.2px; }
.acad { height: 26px; padding-left: 14px; border-left: 1px solid #dfeff5; line-height: 27px; }
.columns { display: flex; gap: 6px; padding-top: 6px; height: 500px; }
.left { width: 450px; display: flex; flex-direction: column; gap: 8px; }
.portlet { background: #fff; border: 1px solid #c6c6c6; border-radius: 5px 5px 0 0; box-shadow: 0 3px 9px 3px rgba(0,0,0,.09); }
.portlet h2 { display: flex; align-items: center; height: 29px; padding: 0 0 5px 8px; border-radius: 4px 4px 0 0; background: linear-gradient(#ededed, #cbcbcb); font: 700 12.500px/24px "Open Sans", sans-serif; letter-spacing: -.2px; color: #444; }
.portlet h2 i { margin: 5px 6px 0 0; border: 5px solid transparent; border-top: 7px solid #555; border-bottom: 0; }
.crumb { height: 35px; padding-left: 10px; line-height: 40px; letter-spacing: .06px; }
.quick { height: 288px; }
.editpref { height: 41px; padding-left: 10px; line-height: 41px; letter-spacing: -.05px; }
.launch { display: flex; align-items: center; gap: 4px; height: 22px; padding-left: 14px; font-size: 13px; font-weight: 700; letter-spacing: -.05px; }
.tiles { display: grid; grid-template-columns: repeat(6, 40px); grid-auto-rows: 40px; gap: 11px 8px; padding: 7px 0 0 18px; }
.tile { display: flex; align-items: center; justify-content: center; background: linear-gradient(#fafafa, #dcdcdc); border: 1px solid #fff; box-shadow: 0 0 3px rgba(0,0,0,.35); }
.tile svg { width: 32px; height: 32px; }
.tile.dark { background: linear-gradient(#eee, #999); }
.folders { list-style: none; padding: 9px 0 0 12px; font-size: 12.700px; letter-spacing: 0; }
.folders li { display: flex; align-items: center; gap: 4px; height: 25px; border-bottom: 1px solid #ccc; }
.right { flex: 1; height: 388px; }
.article { padding-left: 519px; line-height: 14px; white-space: nowrap; letter-spacing: .01px; }
.article p { margin-left: -1px; }
.article .p1 { margin-left: 2px; letter-spacing: -.05px; }
.p1 { padding-top: 66px; }
.p2 { padding-top: 26px; }
.p3 { padding-top: 14px; }
.p4, .p6 { padding-top: 12px; }
.p5 { padding-top: 26px; }
.back-n { margin-left: -5px; letter-spacing: .04px; }
.back-a, .back-h { margin-left: -3px; }
.back-l { margin-left: 1px; letter-spacing: .03px; }
.grip { position: absolute; right: 0; bottom: 0; }

.prefs { position: absolute; left: 390px; top: 84px; width: 668px; height: 560px; border-radius: 5px 5px 0 0; background: #ededed; box-shadow: 0 0 1px rgba(0,0,0,.7), 0 15px 34px 4px rgba(0,0,0,.52); }
.prefs-head { height: 54px; border-radius: 5px 5px 0 0; background: linear-gradient(#d0d0d0, #a2a2a2); border-bottom: 1px solid #515151; box-shadow: inset 0 1px 0 #e8e8e8; }
.prefs-head .toolbar { padding-left: 8px; margin-top: 2px; }
.showall { width: 80px; height: 22px; margin-left: 7px; border: 1px solid #555; border-radius: 4px; background: linear-gradient(#fdfdfd, #c4c4c4); font-size: 13px; line-height: 20px; text-align: center; letter-spacing: .25px; }
.search { width: 150px; height: 22px; margin: 0 8px 0 auto; padding: 4px 0 0 4px; border: 1px solid #aaa; border-top-color: #666; border-radius: 11px; background: #fff; }
.group { border-bottom: 1px solid #d3d3d3; }
.group.alt { background: #e5e5e5; }
.group h2 { padding-left: 14px; font-size: 13px; font-weight: 700; line-height: 20px; height: 27px; letter-spacing: .08px; }
.g1 { height: 104px; padding-top: 4px; }
.g2 { height: 100px; padding-top: 1px; }
.g3 { height: 102px; padding-top: 2px; }
.g4 { height: 100px; padding-top: 1px; }
.g5 { height: 100px; padding-top: 2px; border: 0; }
.items { display: grid; grid-template-columns: repeat(8, 80.800px); padding-left: 5.300px; }
.item { font-size: 11px; line-height: 14px; text-align: center; letter-spacing: .2px; white-space: nowrap; }
.item svg { width: 32px; height: 32px; margin: 0 auto 2px; filter: drop-shadow(0 1px 1px rgba(0,0,0,.3)); }
.highlight { position: absolute; left: 867px; top: 252px; width: 102px; height: 95px; border: 3px solid #f00; }
```
